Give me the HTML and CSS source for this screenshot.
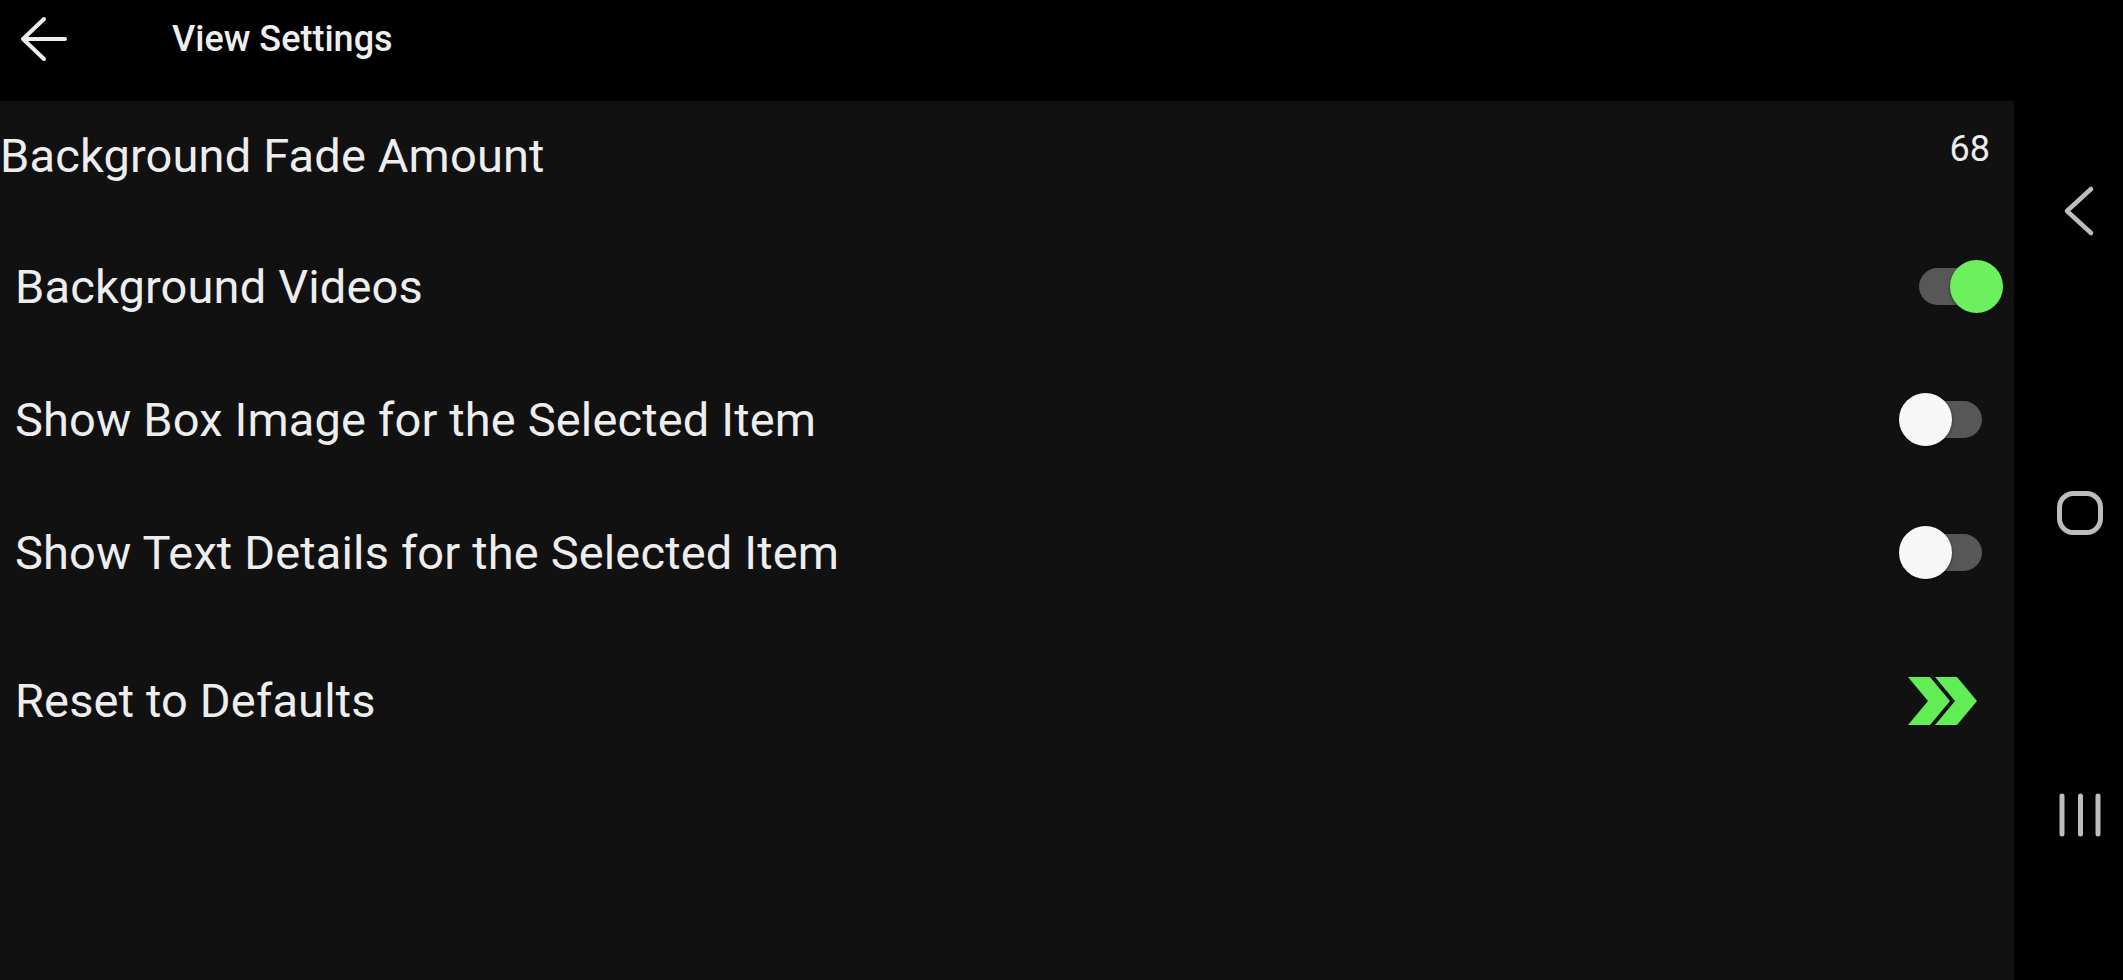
FILE: index.html
```html
<!DOCTYPE html>
<html lang="en">
	<head>
		<meta charset="utf-8">
		<title>View Settings</title>
		<link rel="stylesheet" href="styles.css">
	</head>
	<body>
		<div id="tela">
			<div id="app">
				<header>
					<div class="barra">
						<svg class="voltar" width="48" height="48" viewBox="0 0 48 48">
							<path d="M4 24 H46 M25 4 L4 24 L25 44" fill="none" stroke="#eeeeee" stroke-width="4" stroke-linecap="round" stroke-linejoin="round"/>
						</svg>
						<h1>View Settings</h1>
					</div>
				</header>

				<div id="lista">
					<div class="linha linha-fade">
						<span class="rotulo rotulo-fade">Background Fade Amount</span>
						<span class="valor">68</span>
					</div>

					<div class="linha">
						<span class="rotulo">Background Videos</span>
						<div class="chave ligada">
							<div class="trilho"></div>
							<div class="bola"></div>
						</div>
					</div>

					<div class="linha">
						<span class="rotulo">Show Box Image for the Selected Item</span>
						<div class="chave">
							<div class="trilho"></div>
							<div class="bola"></div>
						</div>
					</div>

					<div class="linha">
						<span class="rotulo">Show Text Details for the Selected Item</span>
						<div class="chave">
							<div class="trilho"></div>
							<div class="bola"></div>
						</div>
					</div>

					<div class="linha linha-reset">
						<span class="rotulo">Reset to Defaults</span>
						<svg class="seta" width="69" height="48" viewBox="0 0 69 48">
							<path d="M0 0 H22 L42 24 L22 48 H0 L20 24 Z" fill="#62ec56"/>
							<path d="M27 0 H49 L69 24 L49 48 H27 L47 24 Z" fill="#62ec56"/>
						</svg>
					</div>
				</div>
			</div>

			<nav id="navegacao">
				<div class="botao">
					<svg width="34" height="52" viewBox="0 0 34 52">
						<path d="M28 4 L4 26 L28 48" fill="none" stroke="#bdbdbd" stroke-width="4.5" stroke-linecap="round" stroke-linejoin="round"/>
					</svg>
				</div>
				<div class="botao">
					<svg width="50" height="48" viewBox="0 0 50 48">
						<rect x="4.5" y="4.5" width="41" height="39" rx="14" fill="none" stroke="#bdbdbd" stroke-width="5"/>
					</svg>
				</div>
				<div class="botao">
					<svg width="46" height="48" viewBox="0 0 46 48">
						<path d="M5 5 V43 M23.5 5 V43 M41 5 V43" fill="none" stroke="#bdbdbd" stroke-width="5" stroke-linecap="round"/>
					</svg>
				</div>
			</nav>
		</div>
	</body>
</html>
```

FILE: styles.css
```css
* {
	margin: 0;
	padding: 0;
	box-sizing: border-box;
}

body {
	width: 2123px;
	height: 980px;
	overflow: hidden;
	background-color: #000;
	font-family: "Roboto", "Noto Sans", sans-serif;
	color: #ededed;
}

#tela {
	display: flex;
	height: 980px;
}

#app {
	flex: 1;
	display: flex;
	flex-direction: column;
}

header {
	height: 101px;
	background-color: #000;
	padding-bottom: 23px;
}

	.barra {
		height: 78px;
		display: flex;
		align-items: center;
		padding-left: 19px;
	}

	.voltar {
		flex-shrink: 0;
	}

	h1 {
		margin-left: 105px;
		font-size: 36px;
		font-weight: 500;
		line-height: 1;
		color: #eeeeee;
	}

#lista {
	flex: 1;
	background-color: #111111;
}

	.linha {
		height: 133px;
		display: flex;
		align-items: center;
		justify-content: space-between;
		padding: 0 11px 0 15px;
	}

	.linha-fade {
		height: 109px;
		margin-bottom: 10px;
		padding-left: 0;
	}

	.linha-reset {
		margin-top: 15px;
	}

	.rotulo {
		font-size: 47px;
		line-height: 1;
		letter-spacing: 0.15px;
		white-space: nowrap;
	}

	.valor {
		font-size: 36px;
		line-height: 1;
		margin-right: 13px;
		margin-bottom: 13px;
	}

	.seta {
		margin-right: 26px;
	}

/* chave liga/desliga */
.chave {
	position: relative;
	width: 104px;
	height: 53px;
}

	.trilho {
		position: absolute;
		left: 20px;
		right: 21px;
		top: 8px;
		height: 37px;
		border-radius: 19px;
		background-color: #575757;
	}

	.bola {
		position: absolute;
		left: 0;
		top: 0;
		width: 53px;
		height: 53px;
		border-radius: 50%;
		background-color: #f7f7f7;
		box-shadow: 0 1px 3px rgba(0, 0, 0, 0.5);
	}

	.ligada .bola {
		left: auto;
		right: 0;
		background-color: #6cf05e;
	}

#navegacao {
	width: 109px;
	background-color: #000;
	padding: 60px 0 0 22px;
	display: flex;
	flex-direction: column;
	align-items: center;
}

	.botao {
		height: 302px;
		display: flex;
		align-items: center;
		justify-content: center;
	}
```
